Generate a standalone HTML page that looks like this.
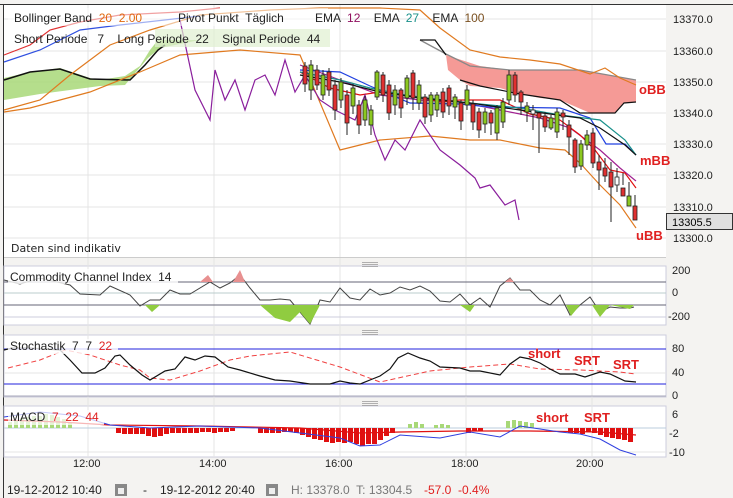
<!DOCTYPE html><html><head><style>
body{margin:0;width:733px;height:498px;background:#f4f3f1;overflow:hidden;font-family:"Liberation Sans",sans-serif}
svg{position:absolute;left:0;top:0}
text{white-space:pre}
</style></head><body>
<svg width="733" height="498" viewBox="0 0 733 498" font-family="Liberation Sans, sans-serif" xml:space="preserve">
<rect x="0" y="0" width="733" height="498" fill="#f4f3f1"/>
<line x1="0" y1="4.5" x2="733" y2="4.5" stroke="#333"/>
<line x1="3.5" y1="4" x2="3.5" y2="498" stroke="#333"/>
<rect x="4" y="5" width="662" height="252" fill="#fff"/>
<rect x="4" y="266" width="662" height="59" fill="#fff" stroke="#ccd"/>
<rect x="4" y="335" width="662" height="62" fill="#fff" stroke="#ccd"/>
<rect x="4" y="406" width="662" height="51" fill="#fff" stroke="#ccd"/>
<g stroke="#e4e4e4">
<line x1="88" y1="5" x2="88" y2="457"/><line x1="214" y1="5" x2="214" y2="457"/><line x1="340" y1="5" x2="340" y2="457"/><line x1="466" y1="5" x2="466" y2="457"/><line x1="592" y1="5" x2="592" y2="457"/>
<line x1="4" y1="19" x2="666" y2="19"/><line x1="4" y1="51" x2="666" y2="51"/><line x1="4" y1="82" x2="666" y2="82"/><line x1="4" y1="113" x2="666" y2="113"/><line x1="4" y1="144" x2="666" y2="144"/><line x1="4" y1="175" x2="666" y2="175"/><line x1="4" y1="207" x2="666" y2="207"/><line x1="4" y1="238" x2="666" y2="238"/>
<line x1="4" y1="293" x2="666" y2="293" stroke="#bcc"/><line x1="4" y1="317" x2="666" y2="317" stroke="#ccd"/>
<line x1="4" y1="373" x2="666" y2="373"/><line x1="4" y1="452" x2="666" y2="452"/><line x1="4" y1="428" x2="666" y2="428" stroke="#bcd"/>
</g>
<line x1="4" y1="282" x2="666" y2="282" stroke="#667"/><line x1="4" y1="305" x2="666" y2="305" stroke="#667"/>
<line x1="4" y1="349" x2="666" y2="349" stroke="#22d"/><line x1="4" y1="384" x2="666" y2="384" stroke="#22d"/>
<line x1="4" y1="396" x2="666" y2="396" stroke="#aab"/>
<line x1="4" y1="257.5" x2="666" y2="257.5" stroke="#ccc"/>
<g stroke="#999" stroke-width="0.7"><path d="M362 262.5h16M362 264.5h16M362 266.5h16"/><path d="M362 330.5h16M362 332.5h16M362 334.5h16"/><path d="M362 401.5h16M362 403.5h16M362 405.5h16"/></g>
<path d="M4 78 L30 72 L60 68 L90 78 L100 80 L125 76 L140 66 L150 50 L158 40 L200 40 L160 48 L148 58 L125 85 L100 86 L70 90 L40 94 L4 100Z" fill="#a8d878" opacity="0.85"/>
<path d="M446 55 L480 66 L510 70 L580 70 L636 80 L636 102 L624 103 L615 113 L590 113 L560 100 L540 98 L520 94 L500 88 L470 86 L460 80 L448 70Z" fill="#f59a96"/>
<path d="M420 40 L446 54 L470 66 L510 70 L580 70 L636 80" fill="none" stroke="#888" stroke-width="1.3"/>
<path d="M4 80 L30 72 L60 69 L90 79 L130 80 L145 65 L158 50 L165 45" fill="none" stroke="#111" stroke-width="1.5"/>
<path d="M460 80 L480 86 L520 94 L560 100 L580 113 L600 113 L615 113 L624 103 L636 102" fill="none" stroke="#111" stroke-width="1.2"/>
<path d="M420 40 L435 40 L446 55" fill="none" stroke="#111" stroke-width="1.3"/>
<g fill="none" stroke-width="1.2">
<path d="M4 110 L40 100 L70 75 L110 45 L150 30 L200 15 L270 10 L320 8 L380 8 L420 10 L440 28 L470 50 L500 57 L530 60 L560 64 L590 74 L605 68 L620 78 L636 85" stroke="#e07a20"/>
<path d="M4 112 L30 108 L60 100 L90 92 L140 72 L180 55 L240 50 L300 55 L340 150 L380 140 L430 136 L470 140 L500 140 L540 148 L565 150 L580 163 L600 185 L620 205 L636 228" stroke="#e07a20"/>
<path d="M300 65 L340 80 L380 95 L420 100 L460 102 L500 110 L540 118 L570 128 L600 150 L620 168 L636 181" stroke="#a02090"/>
<path d="M300 72 L330 88 L360 95 L380 92 L420 97 L440 102 L460 100 L500 100 L530 114 L560 120 L580 135 L595 150 L610 170 L625 173 L636 188" stroke="#e01010"/>
<path d="M300 70 L340 72 L370 86 L410 103 L460 104 L490 107 L560 108 L590 118 L606 144 L625 144 L636 155" stroke="#2040e0"/>
<path d="M300 72 L340 80 L370 88 L410 96 L460 102 L520 108 L560 115 L600 120 L625 140 L636 155" stroke="#18908a"/>
<path d="M300 75 L340 82 L380 92 L420 98 L470 103 L520 110 L580 118 L600 128 L625 145 L636 155" stroke="#111"/>
<path d="M4 55 L30 45 L50 30 L80 22 L120 15 L180 12 L220 8" stroke="#e03030"/>
<path d="M4 62 L40 50 L80 30 L120 25 L200 16" stroke="#3050e0"/>
<path d="M180 20 L195 90 L210 120 L215 70 L225 100 L235 80 L245 110 L255 80 L265 75 L275 95 L285 60 L295 92 L305 75 L320 100 L335 110 L345 115 L355 120 L365 95 L375 135 L385 160 L395 140 L405 150 L420 120 L440 150 L460 165 L475 178 L480 188 L490 185 L505 205 L515 200 L519 220" stroke="#8a1e9c"/>
</g>
<g stroke="#222" stroke-width="1">
<path d="M305 62v30M311 60v40M317 65v25M323 70v30M329 68v28M335 80v40M341 78v30M347 90v45M353 84v30M359 100v34M365 96v30M371 105v30M377 70v30M383 72v30M389 80v40M395 85v30M401 88v30M407 75v30M413 70v40M419 80v30M425 94v30M431 92v30M437 92v25M443 88v30M449 85v30M455 94v25M461 100v30M467 85v25M473 100v30M479 108v30M485 108v25M491 110v25M497 105v35M503 98v30M509 70v35M515 72v30M521 90v25M527 102v20M533 105v25M539 113v40M545 112v20M551 115v15M557 108v30M563 110v20M569 120v35M575 138v35M581 140v30M587 130v20M593 128v40M599 155v35M605 158v24M611 162v60M617 168v24M623 173v12M629 182v18M635 195v25"/>
</g>
<g stroke="#222" stroke-width="0.8">
<rect x="303" y="66" width="4" height="18" fill="#e03030"/><rect x="309" y="65" width="4" height="25" fill="#8cc820"/><rect x="315" y="70" width="4" height="15" fill="#e03030"/><rect x="321" y="75" width="4" height="20" fill="#8cc820"/><rect x="327" y="72" width="4" height="18" fill="#e03030"/><rect x="333" y="85" width="4" height="25" fill="#e03030"/><rect x="339" y="82" width="4" height="18" fill="#8cc820"/><rect x="345" y="95" width="4" height="28" fill="#e03030"/><rect x="351" y="88" width="4" height="18" fill="#8cc820"/><rect x="357" y="105" width="4" height="20" fill="#e03030"/><rect x="363" y="100" width="4" height="20" fill="#8cc820"/><rect x="369" y="110" width="4" height="15" fill="#8cc820"/><rect x="375" y="72" width="4" height="25" fill="#8cc820"/><rect x="381" y="75" width="4" height="20" fill="#e03030"/><rect x="387" y="85" width="4" height="28" fill="#e03030"/><rect x="393" y="90" width="4" height="15" fill="#8cc820"/><rect x="399" y="90" width="4" height="18" fill="#e03030"/><rect x="405" y="78" width="4" height="20" fill="#8cc820"/><rect x="411" y="73" width="4" height="25" fill="#e03030"/><rect x="417" y="85" width="4" height="18" fill="#8cc820"/><rect x="423" y="97" width="4" height="20" fill="#e03030"/><rect x="429" y="95" width="4" height="20" fill="#8cc820"/><rect x="435" y="95" width="4" height="15" fill="#8cc820"/><rect x="441" y="92" width="4" height="20" fill="#e03030"/><rect x="447" y="88" width="4" height="18" fill="#e03030"/><rect x="453" y="97" width="4" height="10" fill="#8cc820"/><rect x="459" y="103" width="4" height="18" fill="#e03030"/><rect x="465" y="90" width="4" height="15" fill="#8cc820"/><rect x="471" y="104" width="4" height="18" fill="#e03030"/><rect x="477" y="112" width="4" height="18" fill="#e03030"/><rect x="483" y="112" width="4" height="12" fill="#8cc820"/><rect x="489" y="113" width="4" height="10" fill="#e03030"/><rect x="495" y="108" width="4" height="25" fill="#8cc820"/><rect x="501" y="102" width="4" height="20" fill="#8cc820"/><rect x="507" y="75" width="4" height="25" fill="#8cc820"/><rect x="513" y="75" width="4" height="20" fill="#e03030"/><rect x="519" y="92" width="4" height="10" fill="#e03030"/><rect x="525" y="106" width="4" height="6" fill="#8cc820"/><rect x="531" y="110" width="4" height="4" fill="#fff"/><rect x="537" y="113" width="4" height="5" fill="#e03030"/><rect x="543" y="116" width="4" height="11" fill="#e03030"/><rect x="549" y="118" width="4" height="10" fill="#8cc820"/><rect x="555" y="112" width="4" height="20" fill="#8cc820"/><rect x="561" y="113" width="4" height="4" fill="#e03030"/><rect x="567" y="125" width="4" height="12" fill="#e03030"/><rect x="573" y="140" width="4" height="27" fill="#e03030"/><rect x="579" y="144" width="4" height="22" fill="#8cc820"/><rect x="585" y="135" width="4" height="10" fill="#8cc820"/><rect x="591" y="133" width="4" height="30" fill="#e03030"/><rect x="597" y="162" width="4" height="8" fill="#e03030"/><rect x="603" y="168" width="4" height="8" fill="#e03030"/><rect x="609" y="172" width="4" height="15" fill="#e03030"/><rect x="615" y="177" width="4" height="8" fill="#fff"/><rect x="621" y="188" width="4" height="8" fill="#e03030"/><rect x="627" y="196" width="4" height="10" fill="#8cc820"/><rect x="633" y="206" width="4" height="14" fill="#e03030"/>
</g>
<rect x="8" y="8" width="320" height="18" fill="#fff" opacity="0.55"/>
<rect x="155" y="29" width="175" height="18" fill="#e0f0d0" opacity="0.7"/>
<g font-size="12" fill="#222">
<text x="14" y="22">Bollinger Band  <tspan fill="#e06a10">20  2.00</tspan></text>
<text x="178" y="22">Pivot Punkt  Täglich</text>
<text x="315" y="22">EMA  <tspan fill="#901060">12</tspan>    EMA  <tspan fill="#18908a">27</tspan>    EMA  <tspan fill="#7a5020">100</tspan></text>
<text x="14" y="43">Short Periode   7    Long Periode  22    Signal Periode  44</text>
<text x="11" y="252" font-size="11" font-family="DejaVu Sans, sans-serif">Daten sind indikativ</text>
</g>
<g font-weight="bold" font-size="13" fill="#e02020">
<text x="639" y="94">oBB</text><text x="640" y="165">mBB</text><text x="636" y="240">uBB</text>
</g>
<g font-size="11" fill="#222">
<text x="673" y="23">13370.0</text><text x="673" y="55">13360.0</text><text x="673" y="86">13350.0</text><text x="673" y="117">13340.0</text><text x="673" y="148">13330.0</text><text x="673" y="179">13320.0</text><text x="673" y="211">13310.0</text><text x="673" y="242">13300.0</text>
</g>
<rect x="666.5" y="213.5" width="66" height="16" fill="#e0e0e0" stroke="#333"/>
<text x="672" y="226" font-size="11">13305.5</text>
<path d="M4 280 L20 284 L40 278 L70 285 L80 294 L100 295 L110 286 L130 295 L140 306 L150 300 L160 300 L170 290 L180 294 L190 294 L210 282 L220 288 L230 283 L240 275 L250 288 L260 300 L270 300 L280 299 L290 300 L300 312 L310 324 L320 300 L330 302 L340 288 L350 298 L360 300 L370 289 L380 295 L390 293 L400 287 L410 290 L420 286 L430 291 L440 301 L450 302 L460 294 L470 305 L480 298 L490 307 L500 286 L510 278 L520 290 L530 290 L540 300 L550 305 L560 295 L570 315 L580 305 L590 297 L600 312 L610 307 L620 308 L630 308 L634 307" fill="none" stroke="#444" stroke-width="1"/>
<path d="M145 305 L152 312 L160 305Z M260 305 L275 318 L290 322 L300 312 L310 324 L320 305Z M460 305 L470 312 L475 305Z M566 305 L571 316 L580 305Z M592 305 L600 317 L610 305 L630 309 L634 305Z" fill="#90cc40"/>
<path d="M200 282 L208 275 L213 282Z M233 282 L240 270 L245 282Z M505 282 L510 278 L514 282Z" fill="#e89090"/>
<rect x="8" y="269" width="170" height="15" fill="#fff" opacity="0.8"/>
<g font-size="12" fill="#222"><text x="10" y="281">Commodity Channel Index  14</text></g>
<g font-size="11" fill="#222"><text x="672" y="274">200</text><text x="672" y="296">0</text><text x="668" y="320">-200</text></g>
<path d="M8 368 L40 360 L65 350 L90 355 L120 365 L140 370 L150 378 L170 380 L200 371 L230 360 L250 356 L290 352 L340 367 L380 382 L430 371 L470 367 L510 364 L540 369 L580 370 L620 372 L636 374" fill="none" stroke="#f04040" stroke-dasharray="5,3"/>
<path d="M4 350 L12 348 L30 348 L60 350 L70 360 L82 373 L95 373 L105 368 L115 356 L120 355 L130 365 L142 375 L150 380 L165 371 L175 369 L185 357 L195 360 L205 356 L215 357 L228 367 L240 370 L260 376 L275 380 L290 381 L310 384 L330 384 L340 381 L350 383 L360 384 L370 380 L380 376 L390 369 L398 358 L408 353 L420 358 L430 361 L440 367 L460 368 L470 371 L480 371 L500 375 L510 364 L520 357 L530 359 L540 363 L550 369 L560 374 L575 374 L585 377 L600 372 L610 374 L625 381 L636 382" fill="none" stroke="#111" stroke-width="1.2"/>
<rect x="8" y="339" width="110" height="15" fill="#fff" opacity="0.8"/>
<g font-size="12" fill="#222"><text x="10" y="350">Stochastik  7  7  <tspan fill="#e02020">22</tspan></text></g>
<g font-weight="bold" font-size="13" fill="#e02020"><text x="528" y="358">short</text><text x="574" y="365">SRT</text><text x="613" y="369">SRT</text></g>
<g font-size="11" fill="#222"><text x="672" y="352">80</text><text x="672" y="376">40</text><text x="672" y="399">0</text></g>
<g fill="#a8d878"><rect x="8" y="422" width="4" height="6"/><rect x="14" y="420" width="4" height="8"/><rect x="20" y="418" width="4" height="10"/><rect x="26" y="417" width="4" height="11"/><rect x="32" y="416" width="4" height="12"/><rect x="38" y="416" width="4" height="12"/><rect x="44" y="414" width="4" height="14"/><rect x="50" y="415" width="4" height="13"/><rect x="56" y="417" width="4" height="11"/><rect x="62" y="419" width="4" height="9"/><rect x="68" y="423" width="4" height="5"/><rect x="408" y="424" width="4" height="4"/><rect x="414" y="422" width="4" height="6"/><rect x="420" y="424" width="4" height="4"/><rect x="434" y="425" width="4" height="3"/><rect x="440" y="424" width="4" height="4"/><rect x="446" y="425" width="4" height="3"/><rect x="506" y="421" width="4" height="7"/><rect x="512" y="420" width="4" height="8"/><rect x="518" y="421" width="4" height="7"/><rect x="524" y="422" width="4" height="6"/><rect x="530" y="423" width="4" height="5"/></g>
<g fill="#e01010">
<path d="M116 428h5v5h-5zM122 428h5v6h-5zM128 428h5v6h-5zM134 428h5v6h-5zM140 428h5v6h-5zM146 428h5v8h-5zM152 428h5v9h-5zM158 428h5v8h-5zM164 428h5v6h-5zM170 428h5v5h-5zM176 428h5v5h-5zM182 428h5v5h-5zM188 428h5v5h-5zM194 428h5v5h-5zM200 428h5v4h-5zM206 428h5v4h-5zM212 428h5v5h-5zM218 428h5v4h-5zM224 428h5v4h-5zM230 428h5v3h-5zM258 428h5v5h-5zM264 428h5v5h-5zM270 428h5v5h-5zM276 428h5v5h-5zM282 428h5v4h-5zM288 428h5v4h-5zM294 428h5v5h-5zM300 428h5v7h-5zM306 428h5v9h-5zM312 428h5v11h-5zM318 428h5v12h-5zM324 428h5v14h-5zM330 428h5v15h-5zM336 428h5v14h-5zM342 428h5v15h-5zM348 428h5v14h-5zM354 428h5v16h-5zM360 428h5v18h-5zM366 428h5v16h-5zM372 428h5v16h-5zM378 428h5v12h-5zM384 428h5v8h-5zM390 428h5v5h-5zM466 428h5v5h-5zM472 428h5v3h-5zM478 428h5v3h-5zM568 428h5v5h-5zM574 428h5v5h-5zM580 428h5v6h-5zM586 428h5v4h-5zM592 428h5v5h-5zM598 428h5v7h-5zM604 428h5v9h-5zM610 428h5v10h-5zM616 428h5v11h-5zM622 428h5v12h-5zM628 428h5v14h-5z"/></g>
<path d="M4 420 L60 422 L110 425 L200 426 L300 428 L360 433 L400 432 L460 431 L530 431 L600 432 L636 435" fill="none" stroke="#e01010" stroke-width="1.2"/>
<path d="M4 417 L40 412 L80 416 L110 425 L150 428 L200 426 L260 428 L300 433 L340 438 L360 446 L380 445 L400 435 L440 438 L470 432 L500 437 L520 426 L560 432 L580 434 L600 439 L620 450 L636 455" fill="none" stroke="#3040e0" stroke-width="1"/>
<rect x="8" y="410" width="96" height="15" fill="#fff" opacity="0.7"/>
<g font-size="12" fill="#222"><text x="10" y="421">MACD  <tspan fill="#e02020">7  22  44</tspan></text></g>
<g font-weight="bold" font-size="13" fill="#e02020"><text x="536" y="422">short</text><text x="584" y="422">SRT</text></g>
<g font-size="11" fill="#222"><text x="672" y="418">6</text><text x="669" y="437">-2</text><text x="669" y="456">-10</text></g>
<g font-size="11" fill="#222"><text x="73" y="467">12:00</text><text x="199" y="467">14:00</text><text x="325" y="467">16:00</text><text x="451" y="467">18:00</text><text x="576" y="467">20:00</text></g>
<g font-size="12" fill="#222"><text x="7" y="494">19-12-2012 10:40</text><text x="143" y="494">-</text><text x="160" y="494">19-12-2012 20:40</text></g>
<rect x="115" y="484" width="12" height="12" fill="#888"/><rect x="118" y="488" width="6" height="6" fill="#eee"/>
<rect x="266" y="484" width="12" height="12" fill="#888"/><rect x="269" y="488" width="6" height="6" fill="#eee"/>
<text x="291" y="494" font-size="12" fill="#777">H: 13378.0  T: 13304.5</text>
<text x="424" y="494" font-size="12" fill="#e02020">-57.0  -0.4%</text>
</svg>
</body></html>
